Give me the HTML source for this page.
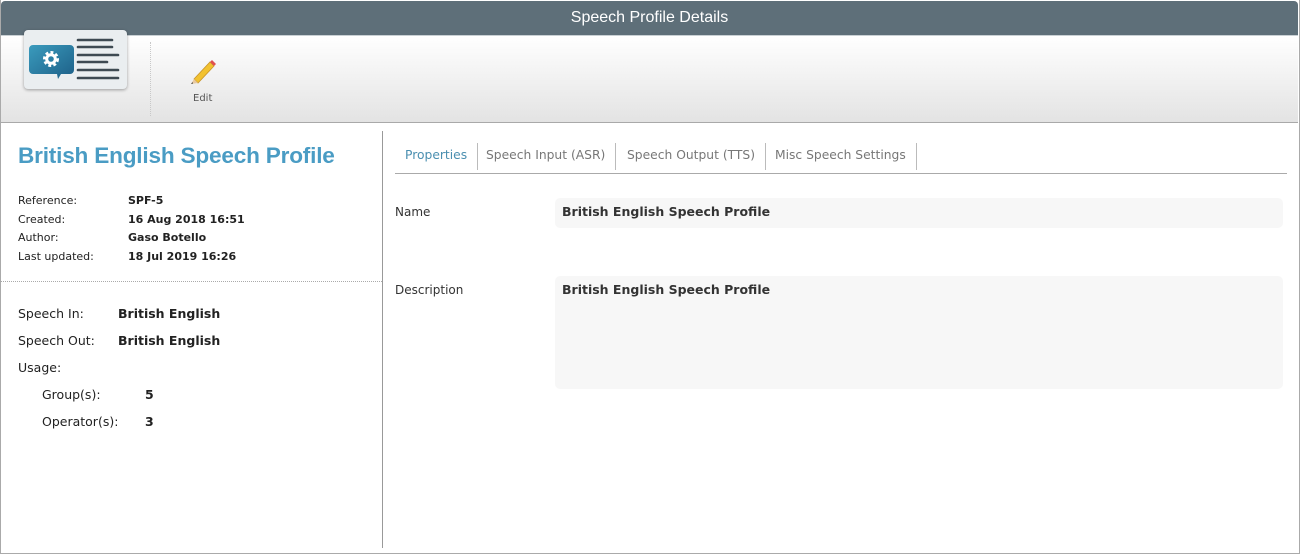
<!DOCTYPE html>
<html><head><style>
*{margin:0;padding:0;box-sizing:border-box}
body{width:1300px;height:554px;background:#fff;font-family:"DejaVu Sans",Verdana,sans-serif;position:relative;overflow:hidden;color:#222}
.frame{position:absolute;left:0;top:0;width:1300px;height:554px;border:1px solid #aaa;border-top:none}
.hdr{position:absolute;left:1px;top:1px;width:1297px;height:34px;background:#5e6f79;color:#fff;text-align:center;font:16px/34px "Liberation Sans",Arial,sans-serif;border-radius:4px 4px 0 0}
.tb{position:absolute;left:1px;top:35px;width:1297px;height:88px;background:linear-gradient(#fff,#e3e3e3);border-bottom:1px solid #a9a9a9;border-top:1px solid #c9d0d4}
.logo{position:absolute;left:24px;top:30px;width:103px;height:59px;background:#eaeef0;border-radius:4px;box-shadow:0 1px 3px rgba(0,0,0,.35)}
.sep{position:absolute;left:150px;top:42px;height:74px;border-left:1px dotted #c8c8c8}
.edit{position:absolute;left:193px;top:93px;font-size:10px;color:#555}
.lp{position:absolute;left:382px;top:131px;height:417px;border-left:1px solid #999}
h1{position:absolute;left:18px;top:143px;font:bold 22.6px "Liberation Sans",Arial,sans-serif;color:#4a9cc4;letter-spacing:-0.2px}
.kv{position:absolute;font-size:11px;line-height:19px}
.kv b{position:absolute;left:110px;white-space:nowrap}
.dot{position:absolute;left:1px;top:281px;width:381px;border-top:1px dotted #aaa}
.kv2{position:absolute;font-size:12.5px;line-height:27px;color:#222}
.tabs{position:absolute;left:395px;top:143px;width:892px;height:31px;border-bottom:1px solid #aaa;font-size:12.3px;color:#777}
.tabs span{position:absolute;top:0;height:27px;line-height:25px;border-right:1px solid #bbb;padding:0 10px}
.lab{position:absolute;left:395px;font-size:12px;color:#333}
.box{position:absolute;left:555px;width:728px;background:#f7f7f7;border-radius:5px;font-weight:bold;font-size:12.5px;padding:6px 7px;color:#333}
</style></head><body>
<div class="hdr">Speech Profile Details</div>
<div class="tb"></div>
<div class="logo">
<svg width="103" height="59" viewBox="0 0 103 59">
<defs><linearGradient id="g" x1="0" y1="0" x2="1" y2="1"><stop offset="0" stop-color="#3a9bbd"/><stop offset="1" stop-color="#1d5f87"/></linearGradient></defs>
<path d="M9 15h37a4 4 0 0 1 4 4v21a4 4 0 0 1-4 4h-9l-3 5l-1-5h-24a4 4 0 0 1-4-4v-21a4 4 0 0 1 4-4z" fill="url(#g)"/>
<circle cx="27" cy="29" r="6" fill="none" stroke="#fff" stroke-width="4" stroke-dasharray="2.6 2"/>
<circle cx="27" cy="29" r="4.3" fill="none" stroke="#fff" stroke-width="3"/>
<g stroke="#3e4a52" stroke-width="2.6" stroke-linecap="round">
<line x1="54" y1="10" x2="88" y2="10"/><line x1="54" y1="17" x2="88" y2="17"/><line x1="54" y1="25" x2="94" y2="25"/><line x1="54" y1="32" x2="83" y2="32"/><line x1="54" y1="40" x2="94" y2="40"/><line x1="54" y1="48" x2="94" y2="48"/></g>
</svg></div>
<div class="sep"></div>
<svg style="position:absolute;left:188px;top:57px" width="30" height="28" viewBox="0 0 30 28">
<path d="M6 22 L22 5 L26 9 L10 26 Z" fill="#f2c230" stroke="#c9952a" stroke-width="0.8"/>
<path d="M22 5 L24 3 L28 7 L26 9 Z" fill="#e05050"/>
<path d="M6 22 L10 26 L3 27 Z" fill="#e8c9a0"/>
<path d="M3 27 L4.5 25 L5 26.6 Z" fill="#444"/>
</svg>
<div class="edit">Edit</div>
<div class="lp"></div>
<h1>British English Speech Profile</h1>
<div class="kv" style="left:18px;top:191px">Reference:<b>SPF-5</b></div>
<div class="kv" style="left:18px;top:210px">Created:<b>16 Aug 2018 16:51</b></div>
<div class="kv" style="left:18px;top:228px">Author:<b>Gaso Botello</b></div>
<div class="kv" style="left:18px;top:247px">Last updated:<b>18 Jul 2019 16:26</b></div>
<div class="dot"></div>
<div class="kv2" style="left:18px;top:300px">Speech In:<b style="position:absolute;left:100px;white-space:nowrap">British English</b></div>
<div class="kv2" style="left:18px;top:327px">Speech Out:<b style="position:absolute;left:100px;white-space:nowrap">British English</b></div>
<div class="kv2" style="left:18px;top:354px">Usage:</div>
<div class="kv2" style="left:42px;top:381px">Group(s):<b style="position:absolute;left:103px">5</b></div>
<div class="kv2" style="left:42px;top:408px">Operator(s):<b style="position:absolute;left:103px">3</b></div>
<div class="tabs">
<span style="left:0;color:#4a8fb0">Properties</span>
<span style="left:81px">Speech Input (ASR)</span>
<span style="left:222px">Speech Output (TTS)</span>
<span style="left:370px">Misc Speech Settings</span>
</div>
<div class="lab" style="top:205px">Name</div>
<div class="box" style="top:198px;height:30px">British English Speech Profile</div>
<div class="lab" style="top:283px">Description</div>
<div class="box" style="top:276px;height:113px">British English Speech Profile</div>
<div class="frame"></div>
</body></html>
